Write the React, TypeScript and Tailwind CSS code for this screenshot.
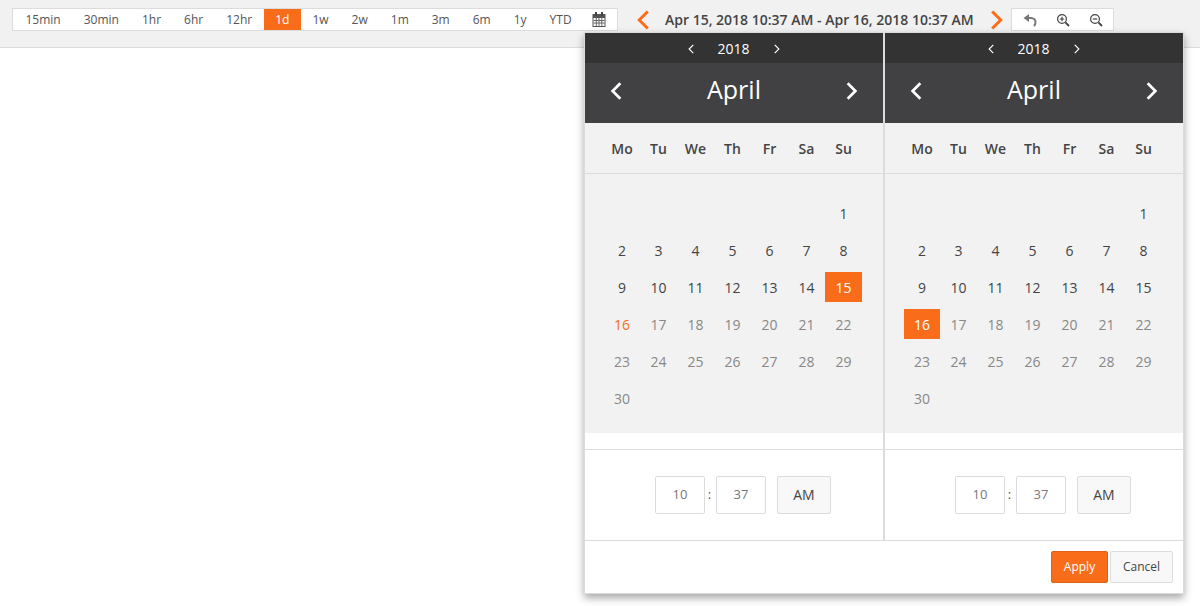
import React from 'react';

const ranges = ['15min', '30min', '1hr', '6hr', '12hr', '1d', '1w', '2w', '1m', '3m', '6m', '1y', 'YTD'];
const weekdays = ['Mo', 'Tu', 'We', 'Th', 'Fr', 'Sa', 'Su'];

const Chevron: React.FC<{ dir: 'left' | 'right'; size: number; width: number; color: string }> = ({ dir, size, width, color }) => (
  <svg width={size} height={size} viewBox="0 0 16 16" fill="none" stroke={color} strokeWidth={width} strokeLinecap="square">
    <path d={dir === 'left' ? 'M11 2 L5 8 L11 14' : 'M5 2 L11 8 L5 14'} />
  </svg>
);

const CalendarIcon = () => (
  <svg width="14" height="15" viewBox="0 0 14 15">
    <rect x="0.5" y="2" width="13" height="13" fill="#555" />
    <rect x="3" y="0" width="2" height="4" fill="#444" />
    <rect x="9" y="0" width="2" height="4" fill="#444" />
    <rect x="1.5" y="6" width="11" height="8" fill="#fff" />
    <path d="M1.5 8.5h11M1.5 11h11M4.3 6v8M7 6v8M9.8 6v8" stroke="#666" strokeWidth="1" />
  </svg>
);

const Month: React.FC<{ selected: number; highlight?: number }> = ({ selected, highlight }) => {
  const days = Array.from({ length: 30 }, (_, i) => i + 1);
  return (
    <div className="w-[298px] flex flex-col">
      <div className="h-[30px] bg-[#333333] flex items-center justify-center gap-[16px] pr-[1px] pt-[1px] text-white text-sm">
        <Chevron dir="left" size={10} width={1.8} color="#fff" />
        <span className="w-[44px] text-center">2018</span>
        <Chevron dir="right" size={10} width={1.8} color="#fff" />
      </div>
      <div className="h-[60px] bg-[#414143] flex items-center justify-between px-[22px] pb-[5px] text-white text-[25px] font-medium leading-none">
        <Chevron dir="left" size={18} width={2.4} color="#fff" />
        <span className="pb-[3px]">April</span>
        <Chevron dir="right" size={18} width={2.4} color="#fff" />
      </div>
      <div className="h-[310px] bg-[#f2f2f2]">
        <div className="h-[51px] border-b border-[#dcdcdc] pl-[19px] pt-[1px] grid grid-cols-[36px_repeat(6,37px)] w-full">
          {weekdays.map((d) => (
            <div key={d} className="flex items-center justify-center text-sm font-semibold text-[#444]">{d}</div>
          ))}
        </div>
        <div className="mt-[24px] pl-[19px] grid grid-cols-[36px_repeat(6,37px)] auto-rows-[37px]">
          {Array.from({ length: 6 }).map((_, i) => <div key={i} />)}
          {days.map((d) => {
            const cls = d === selected
              ? 'bg-[#f96d1a] text-white'
              : d === highlight
                ? 'text-[#f96d1a]'
                : d <= 15
                  ? 'text-[#444]'
                  : 'text-[#888]';
            return (
              <div key={d} className={`h-[30px] pt-[1px] flex items-center justify-center text-sm ${cls}`}>{d}</div>
            );
          })}
        </div>
      </div>
      <div className="h-[17px] border-b border-[#dcdcdc]" />
      <div className="h-[90px] flex items-center justify-center pl-[18px]">
        <div className="w-[50px] h-[38px] border border-[#dcdcdc] rounded-[2px] flex items-center justify-center text-[13px] text-[#777]">10</div>
        <span className="w-[11px] pr-[2px] text-center text-[13px] text-[#555]">:</span>
        <div className="w-[50px] h-[38px] border border-[#dcdcdc] rounded-[2px] flex items-center justify-center text-[13px] text-[#777]">37</div>
        <div className="ml-[11px] w-[54px] h-[38px] border border-[#dcdcdc] rounded-[2px] bg-[#f8f8f8] flex items-center justify-center text-sm text-[#444]">AM</div>
      </div>
    </div>
  );
};

export default function App() {
  return (
    <div className="relative w-[1200px] h-[606px] bg-white overflow-hidden font-['Open_Sans',sans-serif]">
      <div className="h-[48px] bg-[#f1f1f1] border-b border-[#dcdcdc] pl-3 pt-2 flex items-start">
        <div className="h-[23px] w-[606px] pl-[1px] bg-white border border-[#dcdcdc] flex items-stretch text-xs text-[#555]">
          {ranges.map((r) => (
            <div key={r} className={`px-[11.5px] flex items-center ${r === '1d' ? 'bg-[#f96d1a] text-white' : ''}`}>{r}</div>
          ))}
          <div className="ml-[9px] flex items-center"><CalendarIcon /></div>
        </div>
        <div className="ml-[15px] h-[23px] flex items-center">
          <Chevron dir="left" size={20} width={2.4} color="#f96d1a" />
        </div>
        <div className="ml-[12px] h-[23px] flex items-center text-sm font-semibold text-[#444] whitespace-nowrap">
          Apr 15, 2018 10:37 AM - Apr 16, 2018 10:37 AM
        </div>
        <div className="ml-[13px] h-[23px] flex items-center">
          <Chevron dir="right" size={20} width={2.4} color="#f96d1a" />
        </div>
        <div className="ml-[4px] w-[103px] h-[23px] pl-[2px] bg-white border border-[#dcdcdc] flex items-center justify-center gap-[19px]">
          <svg width="14" height="14" viewBox="0 0 14 14" fill="none" stroke="#777" strokeWidth="2">
            <path d="M0.5 5 L6 1 V9 Z" fill="#777" stroke="none" />
            <path d="M5 5 H8 C11 5 12.5 7 12.5 9 C12.5 10.5 12 12 11 13" />
          </svg>
          <svg width="14" height="14" viewBox="0 0 14 14" fill="none" stroke="#444" strokeWidth="1.2">
            <circle cx="6" cy="6" r="4.4" />
            <path d="M9.5 9.5 L13 13" strokeWidth="1.8" />
            <path d="M3.8 6h4.4M6 3.8v4.4" />
          </svg>
          <svg width="14" height="14" viewBox="0 0 14 14" fill="none" stroke="#444" strokeWidth="1.2">
            <circle cx="6" cy="6" r="4.4" />
            <path d="M9.5 9.5 L13 13" strokeWidth="1.8" />
            <path d="M3.8 6h4.4" />
          </svg>
        </div>
      </div>

      {/* date range popup sits over the page */}
      <div className="absolute left-[584px] top-[32px] w-[600px] h-[562px] bg-white border border-[#dcdcdc] shadow-[0_4px_8px_rgba(0,0,0,0.35)]">
        <div className="flex border-b border-[#dcdcdc]">
          <Month selected={15} highlight={16} />
          <div className="w-[2px] bg-[#dcdcdc]" />
          <Month selected={16} />
        </div>
        <div className="flex justify-end gap-[2px] pt-[10px] pr-[10px]">
          <button className="w-[57px] h-[32px] bg-[#f96d1a] border border-[#e0621a] rounded-[2px] text-xs text-white">Apply</button>
          <button className="w-[63px] h-[32px] bg-[#f8f8f8] border border-[#dcdcdc] rounded-[2px] text-xs text-[#444]">Cancel</button>
        </div>
      </div>
    </div>
  );
}
